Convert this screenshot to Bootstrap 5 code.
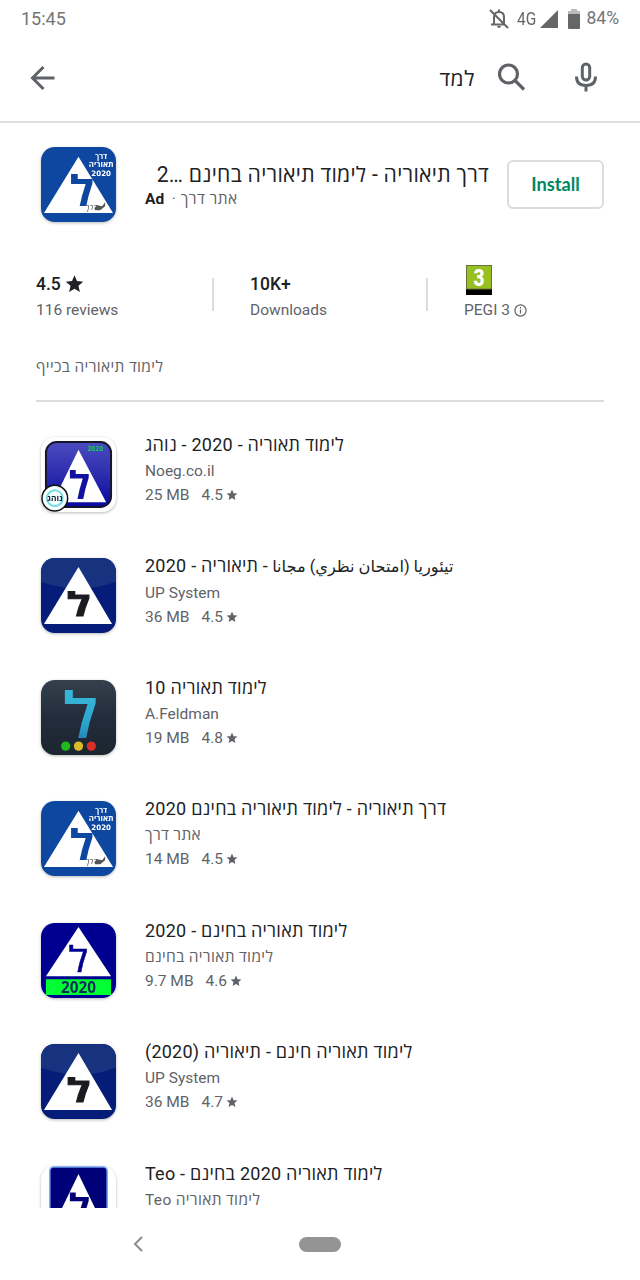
<!DOCTYPE html>
<html lang="en">
<head>
  <meta charset="UTF-8">
  <meta name="viewport" content="width=device-width, initial-scale=1.0">
  <title>Store search</title>
  <link href="https://cdn.jsdelivr.net/npm/bootstrap@5.3.0/dist/css/bootstrap.min.css" rel="stylesheet">
  <style>
    body {
      font-family: Roboto, "Open Sans", "DejaVu Sans", sans-serif;
      color: #202124;
      background: #fff;
    }
    svg { display: block; flex: none; }
    bdi { letter-spacing: .33px; }
    .screen { width: 640px; height: 1280px; }
    .status-bar { height: 36px; padding: 1px 21px 0 21px; font-size: 18px; color: #757575; }
    .network { width: 21px; margin-left: 7px; font-size: 18px; color: #666; transform: scaleX(.86); transform-origin: 0 0; }
    .signal { margin-left: 2px; }
    .battery { margin-left: 10px; }
    .percent { margin-left: 7px; font-size: 17.5px; }
    .search-bar { height: 87px; border-bottom: 2px solid #dedede; color: #5f6368; padding: 0 40px 2px 24px; }
    .query { font-size: 21px; color: #202124; line-height: 28px; letter-spacing: .6px; padding-top: 2px; }
    .icon-search { margin-left: 21px; }
    .icon-mic { margin-left: 44px; }
    .results { height: 1085px; }
    .ad-row { height: 98px; padding: 24px 36px 0 41px; }
    .ad-text { width: 344px; margin-left: 29px; padding-top: 13px; }
    .ad-title { font-size: 21.2px; line-height: 30px; letter-spacing: .28px; white-space: nowrap; }
    .ad-sub { font-size: 15.5px; line-height: 20px; color: #5f6368; margin-top: -1px; }
    .ad-sub b { color: #202124; }
    .ad-sub bdi { letter-spacing: .45px; margin-left: 1px; }
    .btn-install {
      width: 97px; height: 49px; margin: 13px 0 0 18px; padding: 0 0 2px;
      border: 2px solid #dadce0; border-radius: 6px;
      color: #01875f; font: 700 18.2px Lato, sans-serif;
    }
    .stats { height: 132px; padding: 42px 36px 0; }
    .stat-col { flex: none; width: 176px; height: 60px; font-size: 15.5px; line-height: 20px; color: #5f6368; }
    .stat-col:last-child { width: 140px; }
    .stat-top { height: 33px; padding-bottom: 2px; font-size: 17.5px; font-weight: 500; color: #202124; }
    .stat-line { flex: none; width: 2px; height: 33px; margin: 15px 36px 0 0; background: #dadce0; }
    .pegi { margin: 2px 0 0 2px; }
    .blurb { height: 49px; margin: 0 36px; padding-top: 4px; border-bottom: 2px solid #dadce0; font-size: 15.5px; line-height: 20px; color: #5f6368; }
    .blurb bdi { letter-spacing: .35px; }
    .app-list { padding-top: 23.5px; }
    .app-row { height: 121.5px; padding: 11px 36px 0 41px; }
    .app-text { margin-left: 29px; white-space: nowrap; }
    .app-title { font-size: 18px; line-height: 24px; margin-top: -4px; }
    .app-title bdi { letter-spacing: .24px; }
    .app-sub { font-size: 15.5px; line-height: 24px; color: #5f6368; margin-top: 2px; }
    .app-meta { font-size: 15.5px; line-height: 24px; color: #5f6368; }
    .rating { margin: 0 3px 0 12px; }
    .arabic { font-size: 16.2px; letter-spacing: 0; }
    .app-icon { filter: drop-shadow(0 1.5px 1.5px rgba(0, 0, 0, .28)); }
    .nav-keys { height: 72px; padding-left: 132px; color: #8c8c8c; }
    .home-pill { width: 42px; height: 15px; margin-left: 154px; border-radius: 8px; background: #949494; }
  </style>
</head>
<body>

<svg width="0" height="0" class="position-absolute">
  <defs>
    <clipPath id="round"><rect width="76" height="76" rx="14"/></clipPath>
    <linearGradient id="violet" x2="0" y2="1"><stop stop-color="#4b4bc0"/><stop offset=".45" stop-color="#3030b0"/><stop offset="1" stop-color="#0808a0"/></linearGradient>
    <linearGradient id="cyan" x2="0" y2="1"><stop stop-color="#3fc5e0"/><stop offset=".6" stop-color="#2da4cc"/><stop offset="1" stop-color="#1b62a8"/></linearGradient>
    <linearGradient id="night" x2="0" y2="1"><stop stop-color="#34404c"/><stop offset=".5" stop-color="#222c3b"/><stop offset="1" stop-color="#1c2630"/></linearGradient>
    <symbol id="star" viewBox="0 0 24 24"><path fill="currentColor" d="M12 1l3.100 7.300 7.900.7-6 5.200 1.800 7.800L12 17.900l-6.800 4.100 1.800-7.800L1 9l7.900-.7z"/></symbol>
    <symbol id="derech" viewBox="0 0 76 76">
      <g clip-path="url(#round)">
        <rect width="76" height="76" fill="#0d479f"/>
        <path fill="#fff" d="M38 10L73 67H3z"/>
        <g fill="#fff" font-family="Open Sans" font-weight="700" text-anchor="middle">
          <text x="61" y="12" font-size="7.500">דרך</text>
          <text x="61" y="20.500" font-size="7.500" textLength="25" lengthAdjust="spacingAndGlyphs">תאוריה</text>
          <text x="61" y="29" font-size="7.500" font-family="DejaVu Sans" textLength="20" lengthAdjust="spacingAndGlyphs">2020</text>
        </g>
        <text x="29" y="60" font-family="Open Sans" font-weight="700" font-size="43" fill="#0d479f" textLength="25" lengthAdjust="spacingAndGlyphs">ל</text>
        <text x="45" y="64" font-family="Open Sans" font-style="italic" font-size="8" fill="#444">דרך</text>
        <path fill="#555" d="M54 62l3-3 5 1 3-4 0 4-5 4h-5z"/>
      </g>
    </symbol>
    <symbol id="upsystem" viewBox="0 0 76 76">
      <g clip-path="url(#round)">
        <rect width="76" height="76" fill="#051c78"/>
        <path fill="#17327f" d="M0 0h76v24Q38 38 0 24z"/>
        <path fill="#fff" d="M38 9L72 67H3z"/>
        <text x="26" y="59" font-family="Open Sans" font-weight="700" font-size="33" fill="#1b1b1f" stroke="#1b1b1f" textLength="24" lengthAdjust="spacingAndGlyphs">ל</text>
      </g>
    </symbol>
  </defs>
</svg>

<div class="screen d-flex flex-column overflow-hidden">
  <div class="status-bar d-flex align-items-center">
    <span class="me-auto">15:45</span>
    <svg width="22" height="22" viewBox="0 0 22 22" fill="none" stroke="#666" stroke-width="2">
      <path d="M6 17V9q0-5 5-5t5 5v8M3 16.500h14M11 1.500V4M2 2l18 18"/><path fill="#666" stroke="none" d="M9 18h4q-.5 2-2 2t-2-2z"/>
    </svg>
    <span class="network">4G</span>
    <svg class="signal" width="18" height="18" viewBox="0 0 18 18"><path fill="#666" d="M18 0v18H0z"/></svg>
    <svg class="battery" width="12" height="20" viewBox="0 0 12 20"><path fill="#bbb" d="M3 0h6v2h3v4H0V2h3z"/><path fill="#666" d="M0 5h12v14q0 1-1 1H1q-1 0-1-1z"/></svg>
    <span class="percent">84%</span>
  </div>

  <div class="search-bar d-flex align-items-center">
    <svg class="me-auto" width="36" height="36" viewBox="0 0 36 36" fill="none" stroke="currentColor" stroke-width="3"><path d="M30.500 18H8M19.500 7L8.500 18l11 11"/></svg>
    <span class="query" dir="rtl">למד</span>
    <svg class="icon-search" width="32" height="32" viewBox="0 0 32 32" fill="none" stroke="currentColor" stroke-width="3.200"><circle cx="12.500" cy="12" r="9"/><path d="M19 18.500l9 9"/></svg>
    <svg class="icon-mic" width="28" height="32" viewBox="0 0 28 32" fill="none" stroke="currentColor" stroke-width="3"><rect x="10.300" y="2" width="7.400" height="16" rx="3.700"/><path d="M4.500 14.500q0 9 9.500 9t9.500-9M14 23v6.500"/></svg>
  </div>

  <div class="results overflow-hidden">
    <div class="ad-row d-flex">
      <svg class="app-icon" width="75" height="75"><use href="#derech"/></svg>
      <div class="ad-text">
        <div class="ad-title" dir="rtl">דרך תיאוריה - לימוד תיאוריה בחינם …2</div>
        <div class="ad-sub"><b>Ad</b>&nbsp; · <bdi>אתר דרך</bdi></div>
      </div>
      <button class="btn btn-install">Install</button>
    </div>

    <div class="stats d-flex">
      <div class="stat-col">
        <div class="stat-top d-flex align-items-end">4.5<svg class="ms-1" width="19" height="20"><use href="#star"/></svg></div>
        <div class="pt-1">116 reviews</div>
      </div>
      <div class="stat-line"></div>
      <div class="stat-col">
        <div class="stat-top d-flex align-items-end">10K+</div>
        <div class="pt-1">Downloads</div>
      </div>
      <div class="stat-line"></div>
      <div class="stat-col">
        <div class="stat-top d-flex"><svg class="pegi" width="26" height="30" viewBox="0 0 26 30"><path d="M0 0h26v30H0z"/><path fill="#97c020" stroke="#66743c" d="M.5.5h25v23.500H.5z"/><text x="13" y="20.500" text-anchor="middle" font-family="Roboto" font-size="24" font-weight="900" fill="#fff" textLength="11" lengthAdjust="spacingAndGlyphs">3</text></svg></div>
        <div class="pt-1 d-flex align-items-center">PEGI 3<svg class="ms-1" width="13" height="13" viewBox="0 0 13 13" fill="none" stroke="currentColor" stroke-width="1.200"><circle cx="6.500" cy="6.500" r="5.600"/><path d="M6.500 5.500v4M6.500 3v1.400"/></svg></div>
      </div>
    </div>

    <div class="blurb"><bdi>לימוד תיאוריה בכייף</bdi></div>

    <div class="app-list">
      <div class="app-row d-flex">
        <svg class="app-icon" width="75" height="75" viewBox="0 0 76 76">
          <rect width="76" height="76" rx="14" fill="#fff"/>
          <rect x="5" y="5" width="66" height="66" rx="11" fill="url(#violet)" stroke="#15152c" stroke-width="2"/>
          <path fill="#fff" d="M38 13L66 66H12z"/>
          <text x="47" y="14.500" font-family="DejaVu Sans" font-weight="700" font-size="7" fill="#1fc468" textLength="16" lengthAdjust="spacingAndGlyphs">2020</text>
          <text x="28" y="63" font-family="Open Sans" font-weight="700" font-size="39" fill="#1212a0" textLength="22" lengthAdjust="spacingAndGlyphs">ל</text>
          <circle cx="14" cy="62" r="13" fill="#f4ffff" stroke="#111" stroke-width="1.500"/>
          <circle cx="14" cy="62" r="8" fill="none" stroke="#7adbe2" stroke-width="2"/>
          <text x="14" y="65" text-anchor="middle" font-family="Open Sans" font-weight="700" font-size="8.500" fill="#123">נוהג</text>
        </svg>
        <div class="app-text">
          <div class="app-title"><bdi>לימוד תאוריה - 2020 - נוהג</bdi></div>
          <div class="app-sub">Noeg.co.il</div>
          <div class="app-meta d-flex align-items-center">25 MB<span class="rating">4.5</span><svg width="12" height="12"><use href="#star"/></svg></div>
        </div>
      </div>

      <div class="app-row d-flex">
        <svg class="app-icon" width="75" height="75"><use href="#upsystem"/></svg>
        <div class="app-text">
          <div class="app-title"><bdi><span class="arabic">تيئوريا (امتحان نظري) مجانا</span> - תיאוריה - 2020</bdi></div>
          <div class="app-sub">UP System</div>
          <div class="app-meta d-flex align-items-center">36 MB<span class="rating">4.5</span><svg width="12" height="12"><use href="#star"/></svg></div>
        </div>
      </div>

      <div class="app-row d-flex">
        <svg class="app-icon" width="75" height="75" viewBox="0 0 76 76">
          <rect width="76" height="76" rx="14" fill="url(#night)"/>
          <text x="22" y="59" font-family="Open Sans" font-weight="600" font-size="64" fill="url(#cyan)" textLength="36" lengthAdjust="spacingAndGlyphs">ל</text>
          <circle cx="25" cy="67" r="4.700" fill="#1db91d"/><circle cx="38" cy="67" r="4.700" fill="#d8bb26"/><circle cx="51" cy="67" r="4.700" fill="#d93129"/>
        </svg>
        <div class="app-text">
          <div class="app-title"><bdi>לימוד תאוריה 10</bdi></div>
          <div class="app-sub">A.Feldman</div>
          <div class="app-meta d-flex align-items-center">19 MB<span class="rating">4.8</span><svg width="12" height="12"><use href="#star"/></svg></div>
        </div>
      </div>

      <div class="app-row d-flex">
        <svg class="app-icon" width="75" height="75"><use href="#derech"/></svg>
        <div class="app-text">
          <div class="app-title"><bdi>דרך תיאוריה - לימוד תיאוריה בחינם 2020</bdi></div>
          <div class="app-sub"><bdi>אתר דרך</bdi></div>
          <div class="app-meta d-flex align-items-center">14 MB<span class="rating">4.5</span><svg width="12" height="12"><use href="#star"/></svg></div>
        </div>
      </div>

      <div class="app-row d-flex">
        <svg class="app-icon" width="75" height="75" viewBox="0 0 76 76">
          <g clip-path="url(#round)">
            <rect width="76" height="76" fill="#000090"/>
            <path fill="#fff" d="M38 4L71 54H5z"/>
            <path fill="#0f3" d="M5 57h66v16H5z"/>
            <text x="28" y="50" font-family="Open Sans" font-size="36" fill="#000090" stroke="#000090" stroke-width=".5" textLength="20" lengthAdjust="spacingAndGlyphs">ל</text>
            <text x="38" y="70.500" text-anchor="middle" font-family="Open Sans" font-weight="700" font-size="15.500" fill="#062b5c">2020</text>
          </g>
        </svg>
        <div class="app-text">
          <div class="app-title"><bdi>לימוד תאוריה בחינם - 2020</bdi></div>
          <div class="app-sub"><bdi>לימוד תאוריה בחינם</bdi></div>
          <div class="app-meta d-flex align-items-center">9.7 MB<span class="rating">4.6</span><svg width="12" height="12"><use href="#star"/></svg></div>
        </div>
      </div>

      <div class="app-row d-flex">
        <svg class="app-icon" width="75" height="75"><use href="#upsystem"/></svg>
        <div class="app-text">
          <div class="app-title"><bdi>לימוד תאוריה חינם - תיאוריה (2020)</bdi></div>
          <div class="app-sub">UP System</div>
          <div class="app-meta d-flex align-items-center">36 MB<span class="rating">4.7</span><svg width="12" height="12"><use href="#star"/></svg></div>
        </div>
      </div>

      <div class="app-row d-flex">
        <svg class="app-icon" width="75" height="75" viewBox="0 0 76 76">
          <rect width="76" height="76" rx="14" fill="#fff"/>
          <rect x="9" y="1" width="58" height="74" rx="4" fill="#000078" stroke="#6f9cf0" stroke-width="1.500"/>
          <path fill="#fff" d="M38 8L66 66H10z"/>
          <text x="28" y="56" font-family="Open Sans" font-weight="700" font-size="38" fill="#000078" textLength="22" lengthAdjust="spacingAndGlyphs">ל</text>
        </svg>
        <div class="app-text">
          <div class="app-title"><bdi>לימוד תאוריה 2020 בחינם - Teo</bdi></div>
          <div class="app-sub"><bdi>לימוד תאוריה Teo</bdi></div>
        </div>
      </div>
    </div>
  </div>

  <div class="nav-keys d-flex align-items-center">
    <svg width="13" height="18" viewBox="0 0 13 18" fill="none" stroke="currentColor" stroke-width="2"><path d="M10 2L3 9l7 7"/></svg>
    <div class="home-pill"></div>
  </div>
</div>

<script src="https://cdn.jsdelivr.net/npm/bootstrap@5.3.0/dist/js/bootstrap.bundle.min.js"></script>
</body>
</html>
